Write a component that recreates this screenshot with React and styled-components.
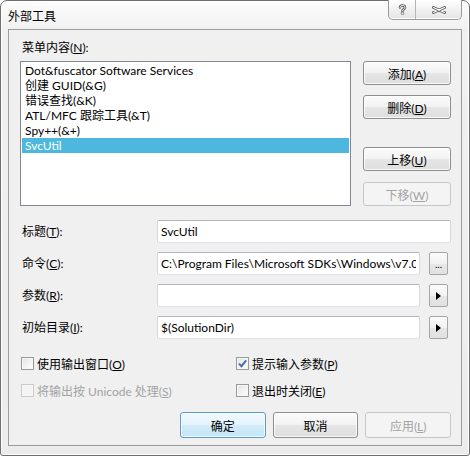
import React from "react";
import styled, { createGlobalStyle } from "styled-components";

const FONT = `"Segoe UI", Lato, "Noto Sans CJK SC", sans-serif`;

const GlobalStyle = createGlobalStyle`
  html, body { margin: 0; padding: 0; background: #ffffff; }
  body { font-family: ${FONT}; font-size: 12px; color: #000; }
  * { box-sizing: border-box; }
`;

// window frame (Win7 basic look)
const Window = styled.div`
  width: 470px;
  height: 456px;
  display: flex;
  flex-direction: column;
  padding: 0 7px 9px;
  border: 1px solid #6f6f6f;
  border-radius: 7px 7px 3px 3px;
  background: linear-gradient(#fcfcfc, #f1f1f1 28px, #ececec);
  box-shadow: inset 0 0 0 1px #ffffff;
`;

const TitleBar = styled.div`
  height: 28px;
  display: flex;
  justify-content: space-between;
  align-items: flex-start;
`;

const Caption = styled.div`
  margin-top: 8px;
  font-size: 12px;
  line-height: 15px;
`;

const CaptionButtons = styled.div`
  display: flex;
  height: 20px;
  margin-top: -1px;
  border: 1px solid #9a9a9a;
  border-top: none;
  border-radius: 0 0 5px 5px;
  overflow: hidden;
  background: linear-gradient(#ffffff, #f1f1f1 50%, #e4e4e4);
  box-shadow: inset 0 -1px 0 #ffffff;
`;

const CaptionButton = styled.div`
  width: ${(p) => p.width}px;
  display: flex;
  align-items: center;
  justify-content: center;
  & + & {
    border-left: 1px solid #b4b4b4;
  }
`;

const Client = styled.div`
  flex: 1;
  display: flex;
  flex-direction: column;
  padding: 10px 10px 7px 11px;
  background: #f0f0f0;
  border: 1px solid #9c9c9c;
`;

const Label = styled.div`
  line-height: 15px;
  height: 15px;
  padding-left: 2px;
  white-space: nowrap;
  color: ${(p) => (p.disabled ? "#a3a3a3" : "#000")};
`;

const ListRow = styled.div`
  display: flex;
  gap: 12px;
  margin-top: 6px;
`;

const ListBox = styled.div`
  width: 331px;
  height: 145px;
  padding: 1px;
  background: #ffffff;
  border: 1px solid #828790;
`;

const ListItem = styled.div`
  height: 15px;
  line-height: 15px;
  padding-left: 3px;
  white-space: nowrap;
  background: ${(p) => (p.selected ? "#4db7dd" : "transparent")};
  color: ${(p) => (p.selected ? "#ffffff" : "#000")};
`;

const ButtonColumn = styled.div`
  display: flex;
  flex-direction: column;
`;

const Button = styled.button`
  width: 88px;
  height: ${(p) => p.h || 24}px;
  margin-top: ${(p) => p.gap || 0}px;
  padding: 0;
  font: 12px ${FONT};
  color: #000;
  border: 1px solid #8e8e8e;
  border-radius: 3px;
  background: linear-gradient(#fbfbfb, #f2f2f2 50%, #e6e6e6 51%, #dedede);
  box-shadow: inset 0 0 0 1px rgba(255, 255, 255, 0.8);

  ${(p) =>
    p.primary &&
    `
    border-color: #5a9ccc;
    background: linear-gradient(#f1f9fe, #e3f3fc 50%, #d2ecfa 51%, #c4e5f7);
    box-shadow: inset 0 0 0 1px rgba(255,255,255,0.85);
  `}

  &:disabled {
    color: #a3a3a3;
    border-color: #c4c7ca;
    background: #f4f4f4;
    box-shadow: none;
  }
`;

const Form = styled.div`
  display: grid;
  grid-template-columns: 137px 263px 9px 20px;
  grid-auto-rows: 23px;
  row-gap: 9px;
  margin-top: 14px;
  align-items: center;
`;

const TextBox = styled.input`
  grid-column: ${(p) => (p.wide ? "2 / span 3" : "2")};
  width: ${(p) => (p.wide ? "294px" : "263px")};
  height: 23px;
  padding: 0 3px;
  font: 12px ${FONT};
  color: #000;
  background: #ffffff;
  border: 1px solid;
  border-color: #b3b5bb #d4d7dd #dfe3e8 #d4d7dd;
  border-radius: 2px;
  outline: none;
`;

const SideButton = styled.button`
  grid-column: 4;
  width: 19px;
  height: 23px;
  padding: 0;
  display: flex;
  align-items: center;
  justify-content: center;
  font: 10px ${FONT};
  color: #000;
  border: 1px solid #a6a6a6;
  border-radius: 2px;
  background: linear-gradient(#fcfcfc, #f1f1f1 50%, #e7e7e7 51%, #e0e0e0);
`;

const Options = styled.div`
  display: grid;
  grid-template-columns: 215px 1fr;
  grid-auto-rows: 16px;
  row-gap: 11px;
  margin-top: 16px;
`;

const Option = styled.label`
  display: flex;
  align-items: center;
  gap: 3px;
  padding-left: 1px;
  color: ${(p) => (p.disabled ? "#a3a3a3" : "#000")};
  white-space: nowrap;
`;

const Box = styled.span`
  width: 13px;
  height: 13px;
  display: flex;
  align-items: center;
  justify-content: center;
  border: 1px solid ${(p) => (p.disabled ? "#cbcbcb" : "#9a9a9a")};
  background: ${(p) =>
    p.disabled ? "#f4f4f4" : "linear-gradient(135deg, #e3e3e3, #ffffff)"};
  box-shadow: inset 0 0 0 1px #f7f7f7;
`;

const BottomRow = styled.div`
  display: flex;
  gap: 7px;
  margin-top: 14px;
  padding-left: 160px;
`;

const U = styled.u`
  text-underline-offset: 1px;
`;

const HelpGlyph = () => (
  <svg width="9" height="11" viewBox="0 0 9 11">
    <path d="M2 3.5C2 0.8 7 0.8 7 3.3C7 5.2 4.5 5 4.5 7" fill="none" stroke="#5a5a5a" strokeWidth="2.6" strokeLinecap="round" />
    <path d="M2 3.5C2 0.8 7 0.8 7 3.3C7 5.2 4.5 5 4.5 7" fill="none" stroke="#ffffff" strokeWidth="1" strokeLinecap="round" />
    <circle cx="4.5" cy="9.4" r="1.3" fill="#ffffff" stroke="#5a5a5a" strokeWidth="0.8" />
  </svg>
);

const CloseGlyph = () => (
  <svg width="14" height="8" viewBox="0 0 14 8">
    <path d="M1.5 1.5L12.5 6.5M1.5 6.5L12.5 1.5" stroke="#5f5f5f" strokeWidth="3" strokeLinecap="round" />
    <path d="M1.5 1.5L12.5 6.5M1.5 6.5L12.5 1.5" stroke="#ffffff" strokeWidth="1.2" strokeLinecap="round" />
  </svg>
);

const Arrow = () => (
  <svg width="5" height="8" viewBox="0 0 5 8">
    <polygon points="0,0 5,4 0,8" fill="#000" />
  </svg>
);

const Check = () => (
  <svg width="11" height="11" viewBox="0 0 11 11">
    <path d="M2 5.6L4.4 8.2L9.2 2.4" fill="none" stroke="#3f6fb0" strokeWidth="1.9" />
  </svg>
);

const CheckOption = ({ checked, disabled, children }) => (
  <Option disabled={disabled}>
    <Box disabled={disabled}>{checked && <Check />}</Box>
    <span>{children}</span>
  </Option>
);

const tools = [
  "Dot&fuscator Software Services",
  "创建 GUID(&G)",
  "错误查找(&K)",
  "ATL/MFC 跟踪工具(&T)",
  "Spy++(&+)",
  "SvcUtil",
];

export default function App() {
  return (
    <>
      <GlobalStyle />
      <Window>
        <TitleBar>
          <Caption>外部工具</Caption>
          <CaptionButtons>
            <CaptionButton width={26}>
              <HelpGlyph />
            </CaptionButton>
            <CaptionButton width={46}>
              <CloseGlyph />
            </CaptionButton>
          </CaptionButtons>
        </TitleBar>

        <Client>
          <Label>
            菜单内容(<U>N</U>):
          </Label>
          <ListRow>
            <ListBox>
              {tools.map((t, i) => (
                <ListItem key={t} selected={i === tools.length - 1}>
                  {t}
                </ListItem>
              ))}
            </ListBox>
            <ButtonColumn>
              <Button>
                添加(<U>A</U>)
              </Button>
              <Button gap={10}>
                删除(<U>D</U>)
              </Button>
              <Button gap={28}>
                上移(<U>U</U>)
              </Button>
              <Button gap={11} disabled>
                下移(<U>W</U>)
              </Button>
            </ButtonColumn>
          </ListRow>

          <Form>
            <Label>
              标题(<U>T</U>):
            </Label>
            <TextBox wide readOnly defaultValue="SvcUtil" />

            <Label>
              命令(<U>C</U>):
            </Label>
            <TextBox readOnly defaultValue="C:\Program Files\Microsoft SDKs\Windows\v7.0A\bin\SvcUtil.exe" />
            <SideButton>...</SideButton>

            <Label>
              参数(<U>R</U>):
            </Label>
            <TextBox readOnly defaultValue="" />
            <SideButton>
              <Arrow />
            </SideButton>

            <Label>
              初始目录(<U>I</U>):
            </Label>
            <TextBox readOnly defaultValue="$(SolutionDir)" />
            <SideButton>
              <Arrow />
            </SideButton>
          </Form>

          <Options>
            <CheckOption>
              使用输出窗口(<U>O</U>)
            </CheckOption>
            <CheckOption checked>
              提示输入参数(<U>P</U>)
            </CheckOption>
            <CheckOption disabled>
              将输出按 Unicode 处理(<U>S</U>)
            </CheckOption>
            <CheckOption>
              退出时关闭(<U>E</U>)
            </CheckOption>
          </Options>

          <BottomRow>
            <Button primary h={26}>
              确定
            </Button>
            <Button h={26}>取消</Button>
            <Button h={26} disabled>
              应用(<U>L</U>)
            </Button>
          </BottomRow>
        </Client>
      </Window>
    </>
  );
}
